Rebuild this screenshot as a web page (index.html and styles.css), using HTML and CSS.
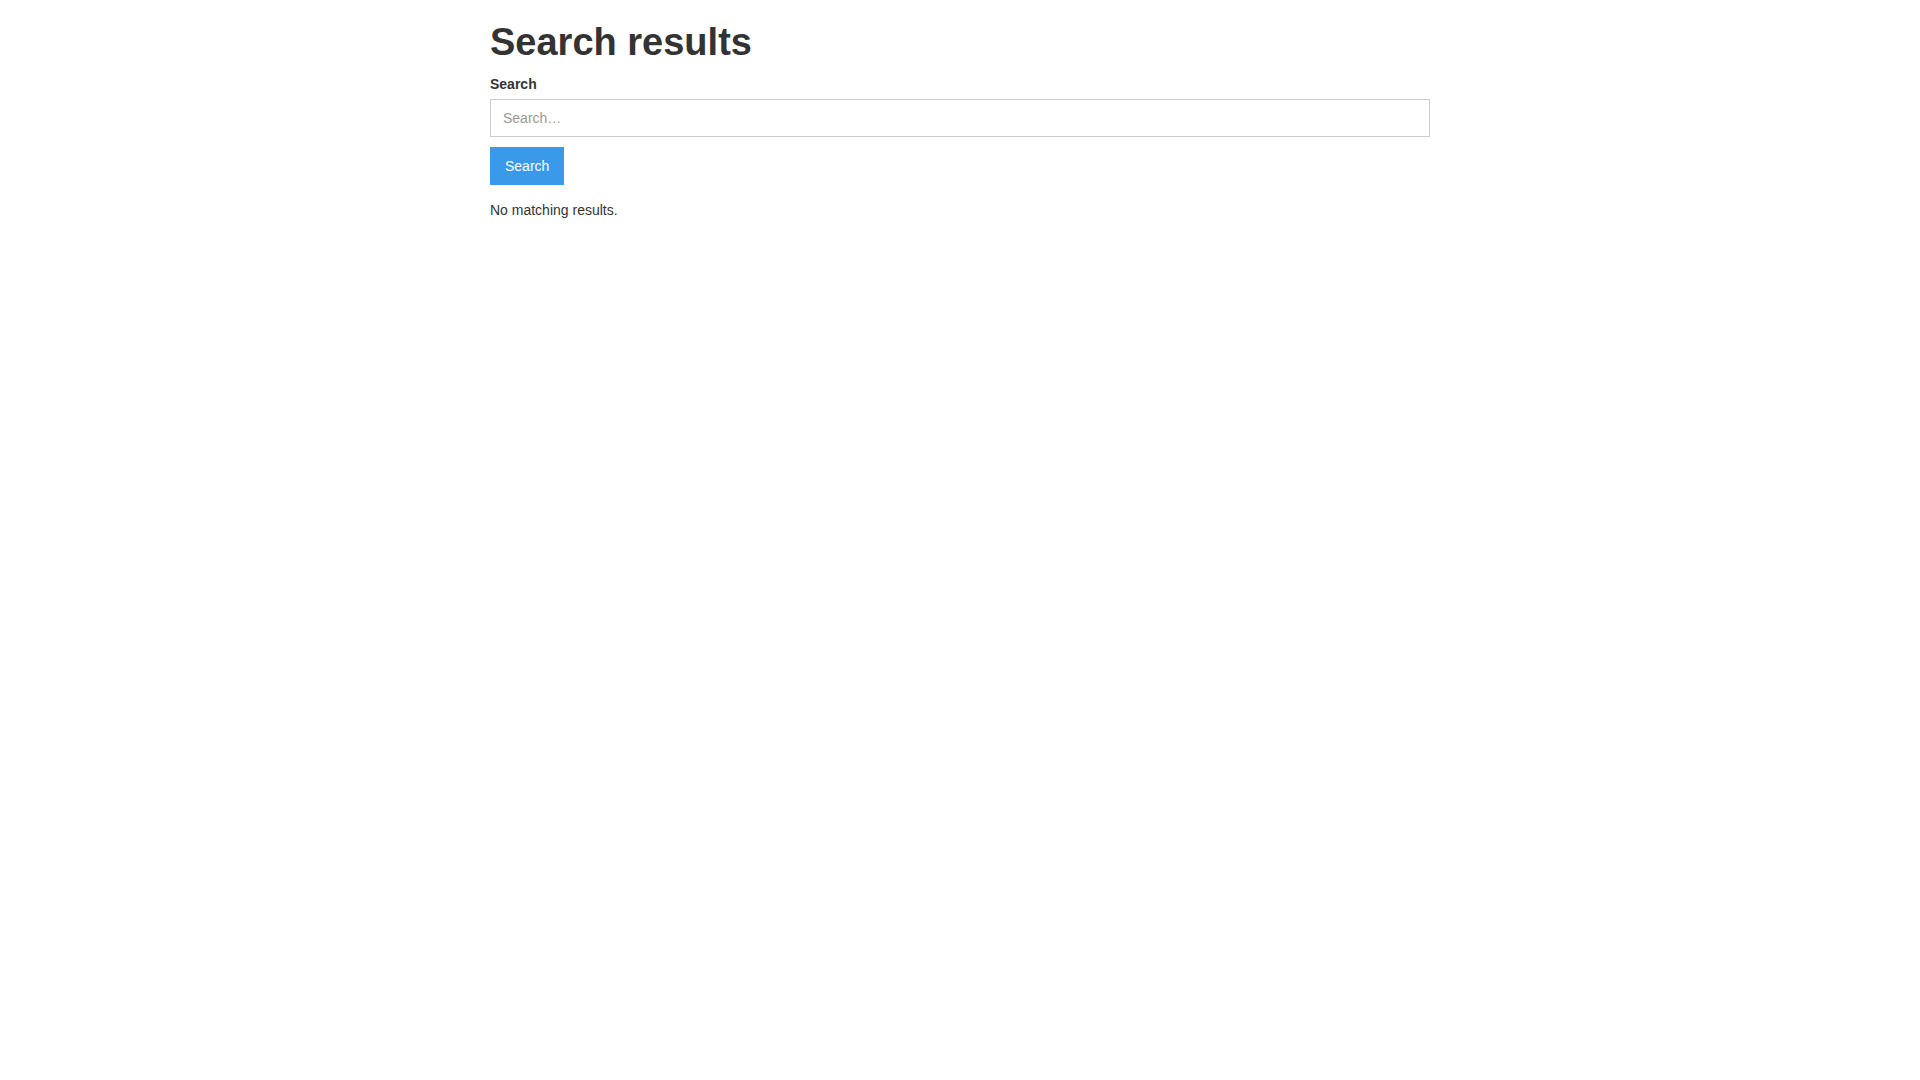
FILE: index.html
```html
<!DOCTYPE html>
<html lang="en">
<head>
<meta charset="utf-8">
<title>Search results</title>
<link rel="stylesheet" href="styles.css">
</head>
<body>
<main class="container">
  <h1 class="page-title">Search results</h1>
  <form class="search-form">
    <label class="field-label" for="q">Search</label>
    <input class="field-input" id="q" type="text" placeholder="Search…">
    <button class="btn-primary" type="submit">Search</button>
  </form>
  <p class="empty-text">No matching results.</p>
</main>
</body>
</html>
```

FILE: styles.css
```css
html, body {
  margin: 0;
  padding: 0;
  background: #ffffff;
}
body {
  font-family: "Liberation Sans", Arial, sans-serif;
  font-size: 14px;
  line-height: 20px;
  color: #333333;
}
.container {
  width: 940px;
  margin: 0 auto;
}
.page-title {
  font-size: 38px;
  font-weight: bold;
  line-height: 41.8px;
  margin: 22px 0 10.4px;
  color: #333333;
}
.search-form {
  display: flex;
  flex-direction: column;
  align-items: flex-start;
  margin: 0;
}
.field-label {
  display: block;
  font-weight: bold;
  line-height: 20px;
  margin-bottom: 5px;
}
.field-input {
  box-sizing: border-box;
  width: 100%;
  height: 38px;
  margin: 0;
  padding: 0 12px;
  border: 1px solid #cccccc;
  border-radius: 0;
  font-family: "Liberation Sans", Arial, sans-serif;
  font-size: 14px;
  color: #333333;
  background: #ffffff;
  outline: none;
}
.field-input::placeholder {
  color: #999999;
  opacity: 1;
}
.btn-primary {
  box-sizing: border-box;
  height: 38px;
  margin-top: 10px;
  padding: 0 15px;
  border: none;
  border-radius: 0;
  background: #3a99e9;
  color: #ffffff;
  font-family: "Liberation Sans", Arial, sans-serif;
  font-size: 14px;
  line-height: 38px;
  cursor: pointer;
}
.empty-text {
  margin: 15px 0 0;
}
```
